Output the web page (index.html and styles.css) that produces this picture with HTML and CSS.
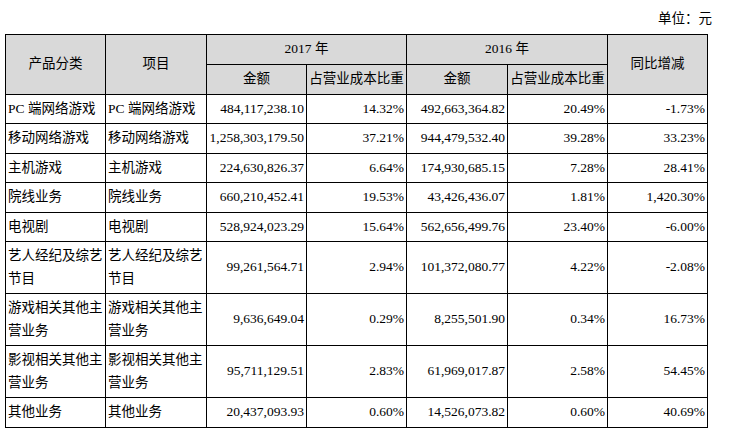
FILE: index.html
```html
<!DOCTYPE html>
<html lang="zh-CN">
<head>
<meta charset="utf-8">
<title>营业成本构成</title>
<link rel="stylesheet" href="styles.css">
</head>
<body>
<div class="page">
  <div class="unit">单位：元</div>
  <table class="cost">
    <colgroup>
      <col class="c1"><col class="c2"><col class="c3"><col class="c4"><col class="c5"><col class="c6"><col class="c7">
    </colgroup>
    <thead>
      <tr class="h1">
        <th rowspan="2">产品分类</th>
        <th rowspan="2">项目</th>
        <th colspan="2">2017 年</th>
        <th colspan="2">2016 年</th>
        <th rowspan="2">同比增减</th>
      </tr>
      <tr class="h2">
        <th>金额</th>
        <th>占营业成本比重</th>
        <th>金额</th>
        <th>占营业成本比重</th>
      </tr>
    </thead>
    <tbody>
      <tr><td class="t">PC 端网络游戏</td><td class="t">PC 端网络游戏</td><td class="n">484,117,238.10</td><td class="n">14.32%</td><td class="n">492,663,364.82</td><td class="n">20.49%</td><td class="n">-1.73%</td></tr>
      <tr><td class="t">移动网络游戏</td><td class="t">移动网络游戏</td><td class="n">1,258,303,179.50</td><td class="n">37.21%</td><td class="n">944,479,532.40</td><td class="n">39.28%</td><td class="n">33.23%</td></tr>
      <tr><td class="t">主机游戏</td><td class="t">主机游戏</td><td class="n">224,630,826.37</td><td class="n">6.64%</td><td class="n">174,930,685.15</td><td class="n">7.28%</td><td class="n">28.41%</td></tr>
      <tr><td class="t">院线业务</td><td class="t">院线业务</td><td class="n">660,210,452.41</td><td class="n">19.53%</td><td class="n">43,426,436.07</td><td class="n">1.81%</td><td class="n">1,420.30%</td></tr>
      <tr><td class="t">电视剧</td><td class="t">电视剧</td><td class="n">528,924,023.29</td><td class="n">15.64%</td><td class="n">562,656,499.76</td><td class="n">23.40%</td><td class="n">-6.00%</td></tr>
      <tr><td class="t">艺人经纪及综艺节目</td><td class="t">艺人经纪及综艺节目</td><td class="n">99,261,564.71</td><td class="n">2.94%</td><td class="n">101,372,080.77</td><td class="n">4.22%</td><td class="n">-2.08%</td></tr>
      <tr><td class="t">游戏相关其他主营业务</td><td class="t">游戏相关其他主营业务</td><td class="n">9,636,649.04</td><td class="n">0.29%</td><td class="n">8,255,501.90</td><td class="n">0.34%</td><td class="n">16.73%</td></tr>
      <tr><td class="t">影视相关其他主营业务</td><td class="t">影视相关其他主营业务</td><td class="n">95,711,129.51</td><td class="n">2.83%</td><td class="n">61,969,017.87</td><td class="n">2.58%</td><td class="n">54.45%</td></tr>
      <tr><td class="t">其他业务</td><td class="t">其他业务</td><td class="n">20,437,093.93</td><td class="n">0.60%</td><td class="n">14,526,073.82</td><td class="n">0.60%</td><td class="n">40.69%</td></tr>
    </tbody>
  </table>
</div>
</body>
</html>
```
FILE: styles.css
```css
html, body {
  margin: 0;
  padding: 0;
  background: #fff;
}
.page {
  padding: 9px 0 0 5px;
  font-family: "Liberation Serif", "Noto Sans CJK SC", serif;
  font-size: 13.5px;
  font-weight: 400;
  color: #000;
}
.unit {
  width: 707px;
  height: 20px;
  line-height: 20px;
  text-align: right;
  margin-bottom: 5px;
}
.cost {
  border-collapse: collapse;
  table-layout: fixed;
  width: 702px;
}
.c1 { width: 100px; }
.c2 { width: 101px; }
.c3 { width: 100px; }
.c4 { width: 100px; }
.c5 { width: 101px; }
.c6 { width: 100px; }
.c7 { width: 100px; }
.cost th,
.cost td {
  border: 1px solid #000;
  padding: 3px 2px;
  line-height: 22.5px;
  vertical-align: middle;
}
.cost th {
  background: #d9d9d9;
  font-weight: 400;
  text-align: center;
  padding: 3px 0;
}
.h1 th { height: 22px; }
.h2 th { height: 23px; }
.cost td.t { text-align: left; }
.cost td.n { text-align: right; white-space: nowrap; }
```
